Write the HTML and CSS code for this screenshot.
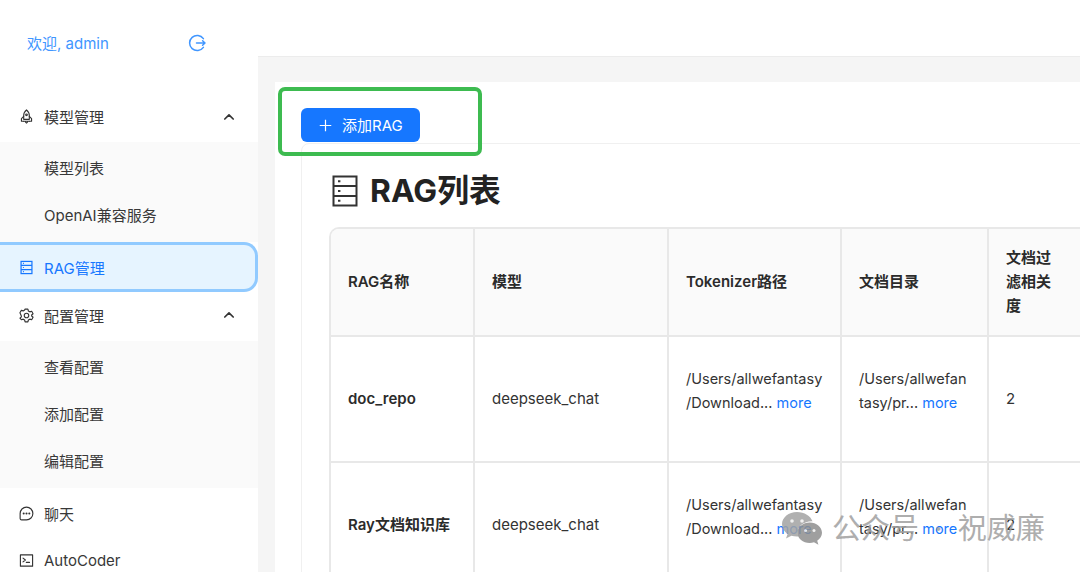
FILE: index.html
```html
<!DOCTYPE html>
<html lang="zh">
<head>
<meta charset="utf-8">
<title>RAG管理</title>
<link rel="stylesheet" href="styles.css">
</head>
<body>
<div class="app">
  <aside class="sidebar">
    <div class="welcome">
      <span class="welcome-text">欢迎, admin</span>
      <svg class="logout" viewBox="0 0 18 18" fill="none" stroke="currentColor" stroke-width="1.5" stroke-linecap="round" stroke-linejoin="round"><path d="M15.4 4.6A7.6 7.6 0 1 0 15.4 13.4"/><path d="M8.5 9H17M14.6 6.8 17 9l-2.4 2.2"/></svg>
    </div>
    <nav class="menu">
      <div class="item has-sub">
        <svg class="icon" viewBox="0 0 16 16" fill="none" stroke="currentColor" stroke-width="1.200" stroke-linejoin="round" stroke-linecap="round"><path d="M8 1C6.300 2.300 5 4.300 5 7v4h6V7C11 4.300 9.700 2.300 8 1Z"/><path d="M5 7.800 2.600 10.200V13H5M11 7.800l2.400 2.400V13H11"/><circle cx="8" cy="6.200" r=".9"/><path d="M5 13h6M6.800 13.400c.2.800.6 1.300 1.200 1.700.6-.4 1-.9 1.200-1.700"/></svg>
        <span class="label">模型管理</span>
        <svg class="chevron" viewBox="0 0 12 8" fill="none" stroke="currentColor" stroke-width="1.700" stroke-linecap="round" stroke-linejoin="round"><path d="M1.800 6 6 1.800 10.200 6"/></svg>
      </div>
      <div class="submenu">
        <div class="subitem">模型列表</div>
        <div class="subitem">OpenAI兼容服务</div>
      </div>
      <div class="item selected">
        <svg class="icon" viewBox="0 0 16 16" fill="none" stroke="currentColor" stroke-width="1.300"><rect x="2.200" y="1.500" width="11.600" height="13"/><path d="M2.200 5.800h11.600M2.200 10.200h11.600"/><path d="M4.200 3.700h1M4.200 8h1M4.200 12.300h1"/></svg>
        <span class="label">RAG管理</span>
      </div>
      <div class="item has-sub">
        <svg class="icon" viewBox="0 0 16 16" fill="none" stroke="currentColor" stroke-width="1.200" stroke-linejoin="round"><path d="M6.500 1.200h3l.5 2 1.500.9 2-.6 1.500 2.600-1.500 1.400v1l1.500 1.400-1.500 2.600-2-.6-1.500.9-.5 2h-3l-.5-2-1.500-.9-2 .6L1 10.900l1.500-1.400v-1L1 5.100l1.500-2.600 2 .6 1.500-.9Z"/><circle cx="8" cy="8" r="2.400"/></svg>
        <span class="label">配置管理</span>
        <svg class="chevron" viewBox="0 0 12 8" fill="none" stroke="currentColor" stroke-width="1.700" stroke-linecap="round" stroke-linejoin="round"><path d="M1.800 6 6 1.800 10.200 6"/></svg>
      </div>
      <div class="submenu">
        <div class="subitem">查看配置</div>
        <div class="subitem">添加配置</div>
        <div class="subitem">编辑配置</div>
      </div>
      <div class="item after-sub">
        <svg class="icon" viewBox="0 0 16 16" fill="none" stroke="currentColor" stroke-width="1.200" stroke-linejoin="round"><path d="M8 1.200a6.800 6.800 0 0 1 0 13.600H2.800a1.600 1.600 0 0 1-1.600-1.600V8A6.800 6.800 0 0 1 8 1.200Z"/><circle cx="5" cy="8" r=".5"/><circle cx="8" cy="8" r=".5"/><circle cx="11" cy="8" r=".5"/></svg>
        <span class="label">聊天</span>
      </div>
      <div class="item">
        <svg class="icon" viewBox="0 0 16 16" fill="none" stroke="currentColor" stroke-width="1.200" stroke-linejoin="round" stroke-linecap="round"><rect x="1.500" y="2" width="13" height="12"/><path d="m4.300 5.500 2.500 2-2.500 2M7.800 10h3.400"/></svg>
        <span class="label">AutoCoder</span>
      </div>
    </nav>
  </aside>
  <main class="main">
    <header class="topbar"></header>
    <div class="content">
      <section class="panel">
        <button class="add-btn" type="button">
          <svg class="plus" viewBox="0 0 14 14" fill="none" stroke="currentColor" stroke-width="1.300"><path d="M7 .8v12.400M.8 7h12.400"/></svg>
          <span>添加RAG</span>
        </button>
        <div class="list-card">
          <h1 class="title">
            <svg class="title-icon" viewBox="0 0 26 32" fill="none" stroke="currentColor" stroke-width="2"><rect x="1.500" y="1.500" width="23" height="29"/><path d="M1.500 11h23M1.500 21h23"/><path d="M6 6.300h2.400M6 16h2.400M6 25.700h2.400"/></svg>
            <span>RAG列表</span>
          </h1>
          <div class="table-wrap">
            <table class="table">
              <colgroup>
                <col class="c1"><col class="c2"><col class="c3"><col class="c4"><col class="c5">
              </colgroup>
              <thead>
                <tr class="head-row">
                  <th>RAG名称</th>
                  <th>模型</th>
                  <th>Tokenizer路径</th>
                  <th>文档目录</th>
                  <th class="last"><span class="narrow">文档过滤相关度</span></th>
                </tr>
              </thead>
              <tbody>
                <tr class="row-a">
                  <td class="name">doc_repo</td>
                  <td>deepseek_chat</td>
                  <td><div class="path">/Users/allwefantasy<br>/Download... <a class="more">more</a></div></td>
                  <td><div class="path">/Users/allwefan<br>tasy/pr... <a class="more">more</a></div></td>
                  <td class="last">2</td>
                </tr>
                <tr class="row-b">
                  <td class="name">Ray文档知识库</td>
                  <td>deepseek_chat</td>
                  <td><div class="path">/Users/allwefantasy<br>/Download... <a class="more">more</a></div></td>
                  <td><div class="path">/Users/allwefan<br>tasy/pr... <a class="more">more</a></div></td>
                  <td class="last">2</td>
                </tr>
              </tbody>
            </table>
          </div>
        </div>
      </section>
    </div>
  </main>
</div>
<div class="highlight"></div>
<div class="watermark">
  <svg class="wechat" viewBox="0 0 42 36"><path fill="#a3a3a3" d="M16 1C7.700 1 1 6.500 1 13.300c0 3.900 2.200 7.300 5.600 9.600L5 27.500l5.400-2.800c1.800.5 3.600.8 5.600.8h1.300c-.4-1.200-.6-2.400-.6-3.700 0-6.400 6.200-11.500 13.800-11.500h1C29.600 5 23.400 1 16 1Z"/><path fill="#8f8f8f" d="M41 21.800c0-5.600-5.600-10.200-12.300-10.200S16.400 16.200 16.400 21.800 22 32 28.700 32c1.500 0 3-.2 4.300-.7l4.400 2.400-1.200-3.900c2.900-2 4.800-4.800 4.800-8Z"/><circle cx="11" cy="10" r="1.800" fill="#eee"/><circle cx="21" cy="10" r="1.800" fill="#eee"/><circle cx="24.500" cy="19.500" r="1.500" fill="#eee"/><circle cx="33" cy="19.500" r="1.500" fill="#eee"/></svg>
  <span class="wm-text">公众号 · 祝威廉</span>
</div>
</body>
</html>
```
FILE: styles.css
```css
* { box-sizing: border-box; }
html, body { margin: 0; padding: 0; width: 1080px; height: 572px; overflow: hidden; background: #f5f5f5; }
body { font-family: Inter, "Noto Sans CJK SC", sans-serif; font-size: 15px; color: #333; }

.app { display: flex; width: 1080px; height: 572px; overflow: hidden; }

.sidebar { flex: 0 0 258px; background: #fff; height: 572px; overflow: hidden; }
.welcome { height: 93px; padding: 34px 52px 0 27px; display: flex; justify-content: space-between; align-items: flex-start; color: #4096ff; }
.welcome-text { font-size: 15px; line-height: 20px; }
.logout { width: 18px; height: 18px; }

.menu { display: flex; flex-direction: column; }
.item { height: 47.500px; flex: none; display: flex; align-items: center; padding: 0 23px 0 19px; color: #383838; }
.has-sub { height: 49px; padding-bottom: 2px; }
.icon { width: 15px; height: 15px; flex: none; margin-right: 10px; color: #333; }
.label { flex: 1; }
.chevron { width: 12px; height: 8px; color: #333; }
.submenu { background: #fafafa; padding: 3px 0; }
.subitem { height: 47.200px; line-height: 47.200px; padding-left: 44px; color: #383838; }
.selected { height: 49.500px; background: #e6f4ff; border: 3px solid #91caff; border-left: 0; border-radius: 0 14px 14px 0; color: #1677ff; }
.selected .icon { color: #1677ff; }
.after-sub { margin-top: 1px; }

.main { flex: 1; display: flex; flex-direction: column; min-width: 0; }
.topbar { height: 57px; flex: none; background: #fff; border-bottom: 1px solid #ececec; }
.content { flex: 1; padding: 25px 0 0 17px; overflow: hidden; }
.panel { width: 900px; height: 600px; background: #fff; padding: 26px 0 0 26px; }

.add-btn { display: flex; align-items: center; width: 119px; height: 34px; padding: 0 0 2px 18px; border: 0; border-radius: 6px; background: #1677ff; color: #fff; font: inherit; font-size: 15px; }
.plus { width: 13px; height: 13px; margin: 2px 10px 0 0; }

.list-card { margin-top: 1px; height: 500px; border: 1px solid #f0f0f0; border-radius: 8px 0 0 0; padding: 0 0 0 27px; }
.title { display: flex; align-items: center; height: 83px; margin: 0; padding: 10px 0 0 3px; font-size: 31.800px; line-height: 40px; font-weight: 700; color: #222; }
.title-icon { width: 26px; height: 32px; margin-right: 12px; color: #333; }

.table-wrap { width: 780px; border: solid #e8e8e8; border-width: 2px 0 0 2px; border-radius: 10px 0 0 0; overflow: hidden; }
.table { border-collapse: separate; border-spacing: 0; table-layout: fixed; width: 760px; }
.c1 { width: 144px; }
.c2 { width: 194px; }
.c3 { width: 173px; }
.c4 { width: 147px; }
.c5 { width: 102px; }
th, td { border: solid #e8e8e8; border-width: 0 2px 2px 0; padding: 0 17px; text-align: left; vertical-align: middle; line-height: 24px; overflow: hidden; }
th { background: #fafafa; font-weight: 600; color: #2b2b2b; }
.head-row { height: 108px; }
.row-a, .row-b { height: 126px; }
.name { font-weight: 600; color: #2b2b2b; }
.last { border-right: 0; }
.narrow { display: block; width: 48px; }
.path { font-size: 14.500px; padding-bottom: 16px; white-space: nowrap; }
.more { color: #1677ff; }

.highlight { position: absolute; left: 278px; top: 87px; width: 204px; height: 69px; border: 4px solid #3dbb50; border-radius: 7px; }
.watermark { position: absolute; left: 781px; top: 511px; display: flex; align-items: center; gap: 9px; opacity: .85; }
.wechat { width: 42px; height: 36px; }
.wm-text { font-size: 29px; line-height: 36px; color: #a0a0a0; white-space: nowrap; word-spacing: 7px; }
```
